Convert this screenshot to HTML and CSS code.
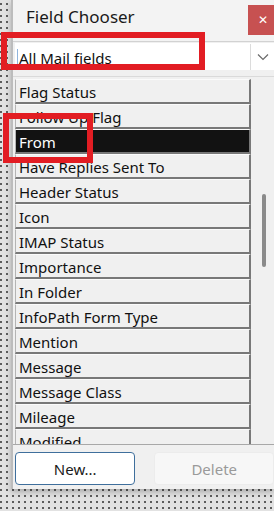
FILE: index.html
```html
<!DOCTYPE html>
<html lang="en">
<head>
    <meta charset="UTF-8">
    <meta name="viewport" content="width=device-width, initial-scale=1.0">
    <title>Field Chooser</title>
    <link rel="stylesheet" href="styles.css">
</head>
<body>

    <div class="window">
        <div class="title-bar">
            <span class="title">Field Chooser</span>
            <button class="close-btn">&#x2715;</button>
        </div>

        <div class="combo">
            <span class="caret"></span>
            <span class="combo-text">All Mail fields</span>
            <span class="combo-arrow">
                <svg width="12" height="8" viewBox="0 0 12 8">
                    <path d="M1 1.5 L6 6.5 L11 1.5" fill="none" stroke="#6a6a6a" stroke-width="1.2"/>
                </svg>
            </span>
        </div>

        <div class="divider"></div>

        <div class="list-area">
            <ul class="fields">
                <li>Flag Status</li>
                <li>Follow Up Flag</li>
                <li class="selected">From</li>
                <li>Have Replies Sent To</li>
                <li>Header Status</li>
                <li>Icon</li>
                <li>IMAP Status</li>
                <li>Importance</li>
                <li>In Folder</li>
                <li>InfoPath Form Type</li>
                <li>Mention</li>
                <li>Message</li>
                <li>Message Class</li>
                <li>Mileage</li>
                <li>Modified</li>
            </ul>
            <div class="scroll">
                <div class="thumb"></div>
            </div>
        </div>

        <div class="actions">
            <button class="btn btn-new">New...</button>
            <button class="btn btn-delete">Delete</button>
        </div>
    </div>

    <!-- red annotation boxes drawn over the screenshot -->
    <div class="mark mark-combo"></div>
    <div class="mark mark-from"></div>

</body>
</html>
```

FILE: styles.css
```css
body {
    margin: 0;
    width: 274px;
    height: 511px;
    overflow: hidden;
    position: relative;
    font-family: "Noto Sans", "Open Sans", sans-serif;
    background-color: #e2e2e2;
    background-image: radial-gradient(#5a5a5a 0.7px, transparent 1.1px);
    background-size: 6px 6px;
    background-position: 4px 1px;
}

.window {
    margin-left: 11px;
    width: 261px;
    height: 489px;
    border-left: 2px solid #bcbcbc;
    background-color: #f0f0f0;
    box-shadow: 0 3px 6px rgba(0, 0, 0, 0.25);
    display: flex;
    flex-direction: column;
}

.title-bar {
    height: 41px;
    border-bottom: 1px solid #d2d2d2;
    display: flex;
    align-items: flex-start;
    padding-left: 13px;
    background-color: #f3f3f3;
}

.title {
    font-size: 17px;
    line-height: 20px;
    margin-top: 7px;
    color: #1a1a1a;
}

.close-btn {
    margin-left: auto;
    margin-top: 5px;
    width: 26px;
    height: 30px;
    border: none;
    padding: 0 0 0 4px;
    background-color: #c75151;
    color: white;
    font-size: 12px;
    font-weight: bold;
    font-family: "DejaVu Sans", sans-serif;
}

.combo {
    margin: 1px 0 0 2px;
    height: 27px;
    background-color: white;
    display: flex;
    align-items: center;
    position: relative;
}

.caret {
    width: 1px;
    height: 16px;
    background-color: #8fb4dc;
    margin-left: 2px;
}

.combo-text {
    flex: 1;
    font-size: 15px;
    color: #111;
    padding-left: 1px;
    padding-top: 3px;
}

.combo-arrow {
    width: 23px;
    height: 26px;
    border-left: 1px solid #dcdcdc;
    display: flex;
    align-items: center;
    justify-content: center;
}

.divider {
    margin-top: 6px;
    height: 1px;
    background-color: #dadada;
}

.list-area {
    margin-top: 2px;
    height: 365px;
    display: flex;
    border-bottom: 1px solid #a8a8a8;
}

.fields {
    list-style: none;
    margin: 0 0 0 2px;
    padding: 0;
    width: 236px;
    overflow: hidden;
}

.fields li {
    height: 22px;
    line-height: 25px;
    padding-left: 3px;
    border-top: 1px solid #fbfbfb;
    border-left: 1px solid #b4b4b4;
    border-right: 2px solid #787878;
    border-bottom: 2px solid #787878;
    font-size: 15px;
    color: #111;
    white-space: nowrap;
    overflow: hidden;
}

.fields li.selected {
    background-color: #121212;
    color: white;
}

.scroll {
    flex: 1;
    position: relative;
}

.thumb {
    position: absolute;
    left: 11px;
    top: 115px;
    width: 4px;
    height: 73px;
    border-radius: 2px;
    background-color: #8a8a8a;
}

.actions {
    display: flex;
    padding: 7px 0 0 2px;
}

.btn {
    height: 33px;
    font-family: "Noto Sans", "Open Sans", sans-serif;
    font-size: 15px;
    border-radius: 4px;
}

.btn-new {
    width: 123px;
    background-color: white;
    border: 1px solid #3f6f9c;
    color: #1a1a1a;
}

.btn-delete {
    margin-left: 19px;
    width: 122px;
    background-color: #f7f7f7;
    border: 1px solid #ececec;
    color: #9a9a9a;
}

.mark {
    position: absolute;
    border: 6px solid #e21d23;
}

.mark-combo {
    left: 1px;
    top: 32px;
    width: 192px;
    height: 26px;
}

.mark-from {
    left: 3px;
    top: 113px;
    width: 78px;
    height: 38px;
}
```
